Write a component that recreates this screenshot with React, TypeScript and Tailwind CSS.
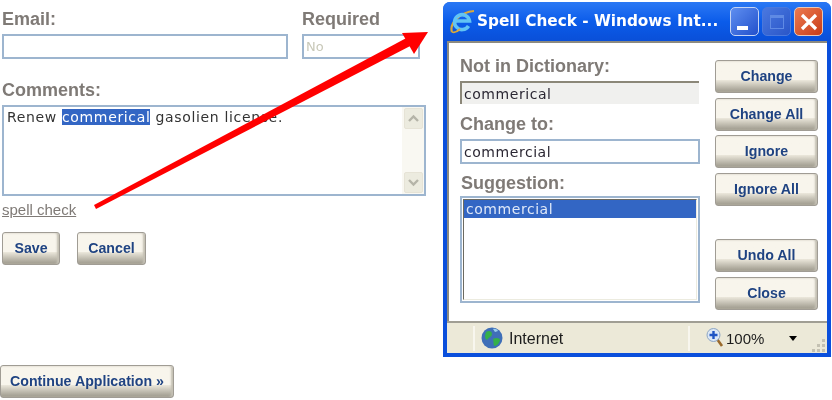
const sans = 'font-["Liberation_Sans",Arial,sans-serif]';
const wide = 'font-["DejaVu_Sans",Verdana,sans-serif]';

function XpButton({ label, className }: { label: string; className: string }) {
  return (
    <button
      className={`${className} flex items-center justify-center rounded-[3px] border border-[#a09c94] bg-gradient-to-b from-[#f8f5ec] from-60% via-[#efebdf] to-[#9d998c] pt-[1px] font-["Liberation_Sans",Arial,sans-serif] text-[14.2px] font-bold text-[#1f4382] shadow-[inset_-2px_0_2px_#c4c0b4]`}
    >
      {label}
    </button>
  );
}

function FieldLabel({ children, className = '' }: { children: string; className?: string }) {
  return <div className={`${sans} text-[18px] leading-[20px] font-bold text-[#7f7a76] ${className}`}>{children}</div>;
}

function ScrollButton({ up }: { up: boolean }) {
  return (
    <div className="flex h-[21px] w-[19px] items-center justify-center rounded-[2px] border border-[#e6e3d6] bg-[#ecebdf]">
      <svg width="13" height="9" viewBox="0 0 13 9">
        <path d={up ? 'M2 7l4.5-4.5L11 7' : 'M2 2l4.5 4.5L11 2'} fill="none" stroke="#b5b4a8" strokeWidth="2.4" />
      </svg>
    </div>
  );
}

function IeLogo() {
  return (
    <svg width="26" height="26" viewBox="0 0 26 26">
      <path d="M3 23C0 15 11 3 25 2" fill="none" stroke="#d9a93c" strokeWidth="2.2" />
      <path d="M19.5 17A7.5 7.5 0 1 1 20.5 12H7" fill="none" stroke="#62c4f4" strokeWidth="3.6" />
      <path d="M3 23c3 1 6-1 8-3" fill="none" stroke="#d9a93c" strokeWidth="1.8" />
    </svg>
  );
}

function Globe() {
  return (
    <svg width="22" height="22" viewBox="0 0 22 22">
      <circle cx="11" cy="11" r="10.5" fill="#3f6fb8" />
      <path d="M5 5c3-2 6-1 6 2s-3 3-4 5-3 0-3-3zM12 12c3-2 7-1 7 1s-3 6-5 6-1-3-2-7z" fill="#35b04a" />
      <path d="M12 2c2-.5 4 0 5 2l-3 1z" fill="#9cd0ee" />
    </svg>
  );
}

function ZoomIcon() {
  return (
    <svg width="18" height="22" viewBox="0 0 18 22">
      <path d="M11 12l5 7" stroke="#9a6a2c" strokeWidth="2.6" />
      <circle cx="7.5" cy="8" r="6.5" fill="#dce8f6" stroke="#8ea6c4" />
      <path d="M7.5 4v8M3.5 8h8" stroke="#1f55c4" strokeWidth="2.4" />
    </svg>
  );
}

function ResizeGrip() {
  return (
    <svg width="16" height="16" viewBox="0 0 16 16">
      <path d="M11 2h3v3h-3zM6 7h3v3H6zM11 7h3v3h-3zM1 12h3v3H1zM6 12h3v3H6zM11 12h3v3h-3z" fill="#c4c1b2" />
    </svg>
  );
}

function SpellCheckWindow() {
  return (
    <div className="flex h-[355px] w-[388px] flex-col overflow-hidden rounded-t-[7px] bg-[#0a4fdc]">
      <div className="flex h-[39px] shrink-0 items-center bg-gradient-to-b from-[#2a78f4] via-[#0b5cea] to-[#0a4fd8] pr-[8px] pl-[6px]">
        <IeLogo />
        <span className={`${wide} ml-[2px] flex-1 text-[15.3px] font-bold whitespace-nowrap text-white`}>
          Spell Check - Windows Int...
        </span>
        <div className="flex gap-[3px]">
          <div className="flex h-[29px] w-[29px] items-end rounded-[5px] border border-[#c4d4f4] bg-gradient-to-br from-[#5f8ef0] to-[#2350cc] pb-[5px] pl-[6px]">
            <div className="h-[4px] w-[11px] bg-white" />
          </div>
          <div className="flex h-[29px] w-[29px] items-center justify-center rounded-[5px] border border-[#4a78dc] bg-gradient-to-br from-[#4a78e0] to-[#2a56c8]">
            <div className="h-[14px] w-[14px] border border-t-[3px] border-[#5f8ae4]" />
          </div>
          <div className="flex h-[29px] w-[29px] items-center justify-center rounded-[5px] border border-[#e8c8b8] bg-gradient-to-br from-[#ec7a50] to-[#c83a14]">
            <svg width="18" height="18" viewBox="0 0 18 18">
              <path d="M2 2l14 14M16 2L2 16" stroke="#fff" strokeWidth="3.2" />
            </svg>
          </div>
        </div>
      </div>
      <div className="mx-[4px] flex h-[280px] shrink-0 border-t-2 border-l-2 border-[#8c8a80] bg-white pl-[11px]">
        <div className="flex w-[240px] flex-col pt-[13px]">
          <FieldLabel>Not in Dictionary:</FieldLabel>
          <div
            className={`${wide} mt-[5px] h-[23px] w-[239px] border-t-2 border-l-2 border-[#8b8778] bg-[#f0f0ee] pl-[2px] text-[14px] leading-[23px] tracking-[0.55px] text-[#2b2733]`}
          >
            commerical
          </div>
          <FieldLabel className="mt-[10px]">Change to:</FieldLabel>
          <div
            className={`${wide} mt-[5px] h-[25px] w-[240px] border-2 border-[#9db5cf] pl-[2px] text-[14px] leading-[23px] tracking-[0.55px] text-[#2b2733]`}
          >
            commercial
          </div>
          <FieldLabel className="mt-[9px] pl-[1px]">Suggestion:</FieldLabel>
          <div className="mt-[3px] h-[107px] w-[240px] border-2 border-[#9db5cf] p-[1px]">
            <div className="h-full border border-t-[#6c6a60] border-r-[#ecebdf] border-b-[#ecebdf] border-l-[#6c6a60]">
              <div className={`${wide} h-[18px] bg-[#3366c4] pl-[2px] text-[14px] leading-[18px] tracking-[0.55px] text-[#dfe8f8]`}>
                commercial
              </div>
            </div>
          </div>
        </div>
        <div className="ml-[15px] flex flex-col pt-[17px]">
          <XpButton label="Change" className="h-[33px] w-[103px]" />
          <XpButton label="Change All" className="mt-[5px] h-[33px] w-[103px]" />
          <XpButton label="Ignore" className="mt-[4px] h-[33px] w-[103px]" />
          <XpButton label="Ignore All" className="mt-[5px] h-[33px] w-[103px]" />
          <XpButton label="Undo All" className="mt-[33px] h-[33px] w-[103px]" />
          <XpButton label="Close" className="mt-[5px] h-[33px] w-[103px]" />
        </div>
      </div>
      <div className={`${sans} mx-[4px] flex h-[32px] items-center border-t-2 border-[#a09e94] bg-[#ece9d8] text-[15px] text-[#1c1c1c]`}>
        <div className="h-[25px] w-[28px] border-r-2 border-[#f8f6ee]" />
        <div className="ml-[6px]">
          <Globe />
        </div>
        <span className="ml-[6px] w-[179px] pt-[2px] text-[16px]">Internet</span>
        <div className="h-[25px] border-r-2 border-[#f8f6ee]" />
        <div className="ml-[16px]">
          <ZoomIcon />
        </div>
        <span className="ml-[2px] pt-[2px]">100%</span>
        <div className="ml-[25px] h-0 w-0 border-x-[4px] border-t-[5px] border-x-transparent border-t-black" />
        <div className="mt-auto ml-auto">
          <ResizeGrip />
        </div>
      </div>
    </div>
  );
}

export default function App() {
  return (
    <div className="relative h-[400px] w-[832px] overflow-hidden bg-white blur-[0.5px]">
      <div className="flex">
        <div className="flex h-[400px] w-[443px] shrink-0 flex-col pt-[9px] pl-[2px]">
          <div className="flex gap-[14px]">
            <div>
              <FieldLabel>Email:</FieldLabel>
              <div className="mt-[5px] h-[25px] w-[286px] border-2 border-[#9db5cf]" />
            </div>
            <div>
              <FieldLabel>Required</FieldLabel>
              <div className={`${wide} mt-[5px] h-[25px] w-[118px] border-2 border-[#9db5cf] pl-[2px] text-[13px] leading-[22px] text-[#c8c8b8]`}>
                No
              </div>
            </div>
          </div>
          <FieldLabel className="mt-[21px]">Comments:</FieldLabel>
          <div className="mt-[5px] flex h-[91px] w-[424px] border-2 border-[#9db5cf]">
            <div className={`${wide} flex-1 pt-[2px] pl-[3px] text-[14px] leading-[17px] tracking-[0.65px] text-[#333]`}>
              Renew <span className="bg-[#3366c4] text-white">commerical</span> gasolien license.
            </div>
            <div className="flex w-[22px] flex-col justify-between bg-[#f9f8f2] py-[1px] pl-[2px]">
              <ScrollButton up />
              <ScrollButton up={false} />
            </div>
          </div>
          <a className={`${sans} mt-[5px] text-[15px] leading-[18px] text-[#7f7a76] underline`}>spell check</a>
          <div className="mt-[13px] flex gap-[17px]">
            <XpButton label="Save" className="h-[33px] w-[58px]" />
            <XpButton label="Cancel" className="h-[33px] w-[69px]" />
          </div>
          <XpButton label="Continue Application »" className="mt-[100px] -ml-[2px] h-[33px] w-[174px] self-start" />
        </div>
        <div className="mt-[2px]">
          <SpellCheckWindow />
        </div>
      </div>
      {/* red annotation arrow drawn over the screenshot */}
      <svg className="absolute top-0 left-0" width="832" height="400" viewBox="0 0 832 400">
        <path d="M94 205L96 209L416 43L412 35Z" fill="#f00" />
        <path d="M402 33L428 32L414 54Z" fill="#f00" />
      </svg>
    </div>
  );
}
